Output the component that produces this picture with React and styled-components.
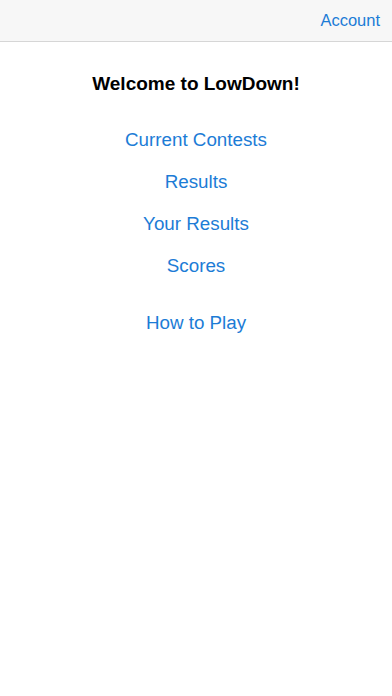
import React from "react";
import styled, { createGlobalStyle } from "styled-components";

const GlobalStyle = createGlobalStyle`
  html, body {
    margin: 0;
    padding: 0;
    background: #ffffff;
    font-family: "Liberation Sans", Arial, sans-serif;
  }
`;

const Page = styled.div`
  width: 392px;
  height: 696px;
  background: #ffffff;
  display: flex;
  flex-direction: column;
`;

const NavBar = styled.div`
  height: 42px;
  background: #f7f7f7;
  border-bottom: 1px solid #d6d6d6;
  display: flex;
  align-items: center;
  justify-content: flex-end;
  padding-right: 12px;
  box-sizing: border-box;
`;

const NavLink = styled.a`
  color: #1c7cd6;
  font-size: 16.5px;
  cursor: pointer;
`;

const Content = styled.div`
  display: flex;
  flex-direction: column;
  align-items: center;
  padding-top: 31px;
`;

const Title = styled.h1`
  margin: 0 0 34px;
  font-size: 19px;
  font-weight: bold;
  color: #000;
  line-height: 22px;
`;

const MenuLink = styled.a`
  color: #1c7cd6;
  font-size: 18.8px;
  line-height: 22px;
  margin-bottom: ${(p) => (p.gap ? "35px" : "20px")};
  cursor: pointer;
`;

const links = [
  { label: "Current Contests" },
  { label: "Results" },
  { label: "Your Results" },
  { label: "Scores", gap: true },
  { label: "How to Play" },
];

export default function App() {
  return (
    <Page>
      <GlobalStyle />
      <NavBar>
        <NavLink>Account</NavLink>
      </NavBar>
      <Content>
        <Title>Welcome to LowDown!</Title>
        {links.map((l) => (
          <MenuLink key={l.label} gap={l.gap ? "true" : undefined}>
            {l.label}
          </MenuLink>
        ))}
      </Content>
    </Page>
  );
}
